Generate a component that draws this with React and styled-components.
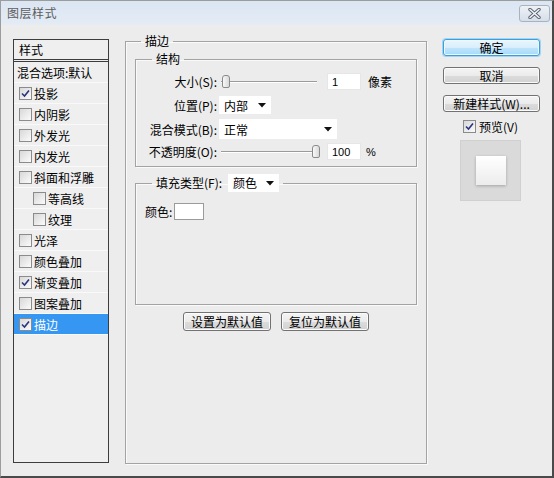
import React from "react"
import styled, { createGlobalStyle } from "styled-components"

const GlobalStyle = createGlobalStyle`
  html, body {
    margin: 0;
    padding: 0;
    background: #ececec;
  }
  body {
    font-family: "Noto Sans CJK SC", "Liberation Sans", sans-serif;
    font-size: 12px;
    color: #000;
  }
`

const styleItems = [
  { id: 1, name: "投影", checked: true },
  { id: 2, name: "内阴影" },
  { id: 3, name: "外发光" },
  { id: 4, name: "内发光" },
  { id: 5, name: "斜面和浮雕" },
  { id: 6, name: "等高线", indent: true },
  { id: 7, name: "纹理", indent: true },
  { id: 8, name: "光泽" },
  { id: 9, name: "颜色叠加" },
  { id: 10, name: "渐变叠加", checked: true },
  { id: 11, name: "图案叠加" },
  { id: 12, name: "描边", checked: true, selected: true },
]

const Window = styled.div`
  width: 554px;
  height: 478px;
  box-sizing: border-box;
  display: flex;
  flex-direction: column;
  background: #ececec;
  border-left: 1px solid #9c9c9c;
  border-top: 1px solid #9c9c9c;
  border-right: 2px solid #4a4a4a;
  border-bottom: 2px solid #4a4a4a;
`

const TitleBar = styled.div`
  height: 23px;
  flex-shrink: 0;
  display: flex;
  align-items: center;
  justify-content: space-between;
  padding: 0 2px 0 6px;
  background: linear-gradient(#dbe6f3, #e3ebf5);
  border-bottom: 1px solid #e6ecf3;
`

const Title = styled.span`
  color: #5c5c5c;
  font-size: 12px;
  letter-spacing: 0.5px;
`

const CloseButton = styled.div`
  width: 29px;
  height: 15px;
  margin-top: 2px;
  border: 1px solid #a9b3bf;
  border-radius: 3px;
  background: linear-gradient(#eef2f7, #d6dee8);
  display: flex;
  align-items: center;
  justify-content: center;
`

const Body = styled.div`
  flex: 1;
  display: grid;
  grid-template-columns: 96px 302px 97px;
  column-gap: 16px;
  align-items: start;
  padding: 14px 0 12px 12px;
`

/* left list */

const StyleList = styled.div`
  border: 1px solid #3d3d3d;
  background: #efefef;
  display: flex;
  flex-direction: column;
  height: 424px;
  box-sizing: border-box;
`

const ListHeader = styled.div`
  height: 19px;
  line-height: 19px;
  padding-left: 5px;
  border-bottom: 3px double #3d3d3d;
`

const ListRow = styled.div`
  height: 21px;
  box-sizing: border-box;
  display: flex;
  align-items: center;
  gap: 2px;
  padding-left: ${p => (p.$indent ? 19 : p.$plain ? 3 : 5)}px;
  border-bottom: 1px solid #f9f9f9;
  background: ${p => (p.$selected ? "#3597f2" : "transparent")};
  color: ${p => (p.$selected ? "#fff" : "#000")};
`

const Box = styled.span`
  width: 11px;
  height: 11px;
  flex-shrink: 0;
  border: 1px solid #8b8b8b;
  background: linear-gradient(135deg, #d8d8d8, #fbfbfb);
  display: flex;
  align-items: center;
  justify-content: center;
`

const Check = ({ checked }) => (
  <Box>
    {checked && (
      <svg width="9" height="9" viewBox="0 0 9 9">
        <path d="M1 4.5 L3.5 7 L8 1.5" fill="none" stroke="#27357e" strokeWidth="1.6" />
      </svg>
    )}
  </Box>
)

/* middle */

const GroupBox = styled.fieldset`
  margin: ${p => p.$mt || 0}px 0 0;
  padding: ${p => p.$pad || "0 9px 0 9px"};
  min-width: 0;
  border: 1px solid #a3a3a3;
  box-shadow: inset 1px 1px 0 #fafafa, 1px 1px 0 #fafafa;
  height: ${p => (p.$h ? `${p.$h}px` : "auto")};
  box-sizing: border-box;
  display: flex;
  flex-direction: column;
`

const Legend = styled.legend`
  margin-left: ${p => p.$ml || 10}px;
  padding: 0 4px;
  line-height: 14px;
  display: flex;
  align-items: center;
  gap: 6px;
`

const FormGrid = styled.div`
  display: grid;
  grid-template-columns: 73px auto;
  grid-template-rows: 23px 24px 24px 21px;
  column-gap: 2px;
  align-items: center;
  padding: 4px 0 4px;
`

const Label = styled.span`
  text-align: right;
  white-space: nowrap;
`

const Controls = styled.div`
  display: flex;
  align-items: center;
`

const SliderTrack = styled.div`
  position: relative;
  width: 96px;
  height: 1px;
  margin-left: 2px;
  background: #9b9b9b;
  box-shadow: 0 1px 0 #fff;
`

const SliderThumb = styled.span`
  position: absolute;
  top: -6px;
  width: 6px;
  height: 11px;
  border: 1px solid #8a8a8a;
  border-radius: 3px 3px 2px 2px;
  background: linear-gradient(90deg, #f8f8f8, #d9d9d9);
`

const NumberInput = styled.div`
  width: 34px;
  height: 17px;
  box-sizing: border-box;
  margin-left: ${p => p.$ml || 10}px;
  padding-left: 4px;
  line-height: 16px;
  font-size: 11px;
  font-family: "Liberation Sans", sans-serif;
  background: #fff;
  border: 1px solid #e6e6e6;
`

const Unit = styled.span`
  margin-left: ${p => p.$ml || 7}px;
  font-size: ${p => (p.$latin ? 11 : 12)}px;
  font-family: ${p => (p.$latin ? '"Liberation Sans", sans-serif' : "inherit")};
`

const Select = styled.div`
  width: ${p => p.$w}px;
  height: ${p => p.$h || 18}px;
  box-sizing: border-box;
  padding: 0 5px 0 5px;
  background: #fff;
  display: flex;
  align-items: center;
  justify-content: space-between;
`

const Arrow = () => (
  <svg width="8" height="5" viewBox="0 0 8 5">
    <path d="M0 0 H8 L4 4.5 Z" fill="#111" />
  </svg>
)

const ColorRow = styled.div`
  display: flex;
  align-items: center;
  gap: 2px;
  padding: 11px 0 0 0;
`

const Swatch = styled.span`
  width: 28px;
  height: 15px;
  background: #fff;
  border: 1px solid #9b9b9b;
`

const DefaultRow = styled.div`
  display: flex;
  justify-content: center;
  gap: 10px;
  margin-top: 7px;
`

const Button = styled.div`
  height: ${p => p.$h || 17}px;
  width: ${p => (p.$w ? `${p.$w}px` : "auto")};
  box-sizing: border-box;
  display: flex;
  align-items: center;
  justify-content: center;
  border: 1px solid ${p => (p.$primary ? "#3c9fd9" : "#727272")};
  border-radius: 3px;
  background: ${p =>
    p.$primary
      ? "linear-gradient(#eaf6fd 0%, #d8eefb 50%, #bee6fd 51%, #a7d9f5 100%)"
      : "linear-gradient(#f4f4f4 0%, #ebebeb 50%, #dcdcdc 51%, #d2d2d2 100%)"};
  box-shadow: ${p => (p.$primary ? "0 0 0 1px #9fd6f5, inset 0 0 0 1px #eef8fe" : "inset 0 0 0 1px #fbfbfb")};
  white-space: nowrap;
`

/* right column */

const SideColumn = styled.div`
  display: flex;
  flex-direction: column;
  align-items: stretch;
`

const ButtonStack = styled.div`
  display: flex;
  flex-direction: column;
  gap: 11px;
`

const PreviewToggle = styled.div`
  display: flex;
  align-items: center;
  gap: 3px;
  margin-top: 8px;
  padding-left: 20px;
  height: 13px;
`

const PreviewBox = styled.div`
  width: 61px;
  height: 61px;
  margin: 7px 0 0 17px;
  background: #dadada;
  border: 1px solid #d0d0d0;
  box-sizing: border-box;
  display: flex;
  align-items: center;
  justify-content: center;
`

const PreviewSquare = styled.div`
  width: 30px;
  height: 29px;
  background: linear-gradient(#ffffff, #ececec);
  box-shadow: 0 1px 3px rgba(0, 0, 0, 0.25);
`

const App = () => (
  <>
    <GlobalStyle />
    <Window>
      <TitleBar>
        <Title>图层样式</Title>
        <CloseButton>
          <svg width="13" height="11" viewBox="0 0 13 11">
            <path d="M2 1.5 L11 9.5 M11 1.5 L2 9.5" stroke="#5a6470" strokeWidth="3.4" strokeLinecap="round" />
            <path d="M2 1.5 L11 9.5 M11 1.5 L2 9.5" stroke="#f4f6f8" strokeWidth="1.5" strokeLinecap="round" />
          </svg>
        </CloseButton>
      </TitleBar>

      <Body>
        <StyleList>
          <ListHeader>样式</ListHeader>
          <ListRow $plain>混合选项:默认</ListRow>
          {styleItems.map(item => (
            <ListRow key={item.id} $indent={item.indent} $selected={item.selected}>
              <Check checked={item.checked} />
              {item.name}
            </ListRow>
          ))}
        </StyleList>

        <GroupBox $mt={-5} $h={430} $pad="0 9px">
          <Legend $ml={6}>描边</Legend>
          <GroupBox $mt={4} $pad="0 8px">
            <Legend $ml={8}>结构</Legend>
            <FormGrid>
              <Label>大小(S):</Label>
              <Controls>
                <SliderTrack>
                  <SliderThumb style={{ left: 1 }} />
                </SliderTrack>
                <NumberInput $ml={10}>1</NumberInput>
                <Unit>像素</Unit>
              </Controls>

              <Label>位置(P):</Label>
              <Controls>
                <Select $w={52}>
                  内部
                  <Arrow />
                </Select>
              </Controls>

              <Label>混合模式(B):</Label>
              <Controls>
                <Select $w={118} $h={20}>
                  正常
                  <Arrow />
                </Select>
              </Controls>

              <Label>不透明度(O):</Label>
              <Controls>
                <SliderTrack>
                  <SliderThumb style={{ left: 91 }} />
                </SliderTrack>
                <NumberInput $ml={10}>100</NumberInput>
                <Unit $latin $ml={5}>%</Unit>
              </Controls>
            </FormGrid>
          </GroupBox>

          <GroupBox $mt={7} $h={131} $pad="0 9px">
            <Legend $ml={7}>
              填充类型(F):
              <Select $w={51}>
                颜色
                <Arrow />
              </Select>
            </Legend>
            <ColorRow>
              颜色:
              <Swatch />
            </ColorRow>
          </GroupBox>

          <DefaultRow>
            <Button $h={19} $w={88}>设置为默认值</Button>
            <Button $h={19} $w={88}>复位为默认值</Button>
          </DefaultRow>
        </GroupBox>

        <SideColumn>
          <ButtonStack>
            <Button $primary>确定</Button>
            <Button>取消</Button>
            <Button>新建样式(W)...</Button>
          </ButtonStack>
          <PreviewToggle>
            <Check checked />
            预览(V)
          </PreviewToggle>
          <PreviewBox>
            <PreviewSquare />
          </PreviewBox>
        </SideColumn>
      </Body>
    </Window>
  </>
)

export default App
